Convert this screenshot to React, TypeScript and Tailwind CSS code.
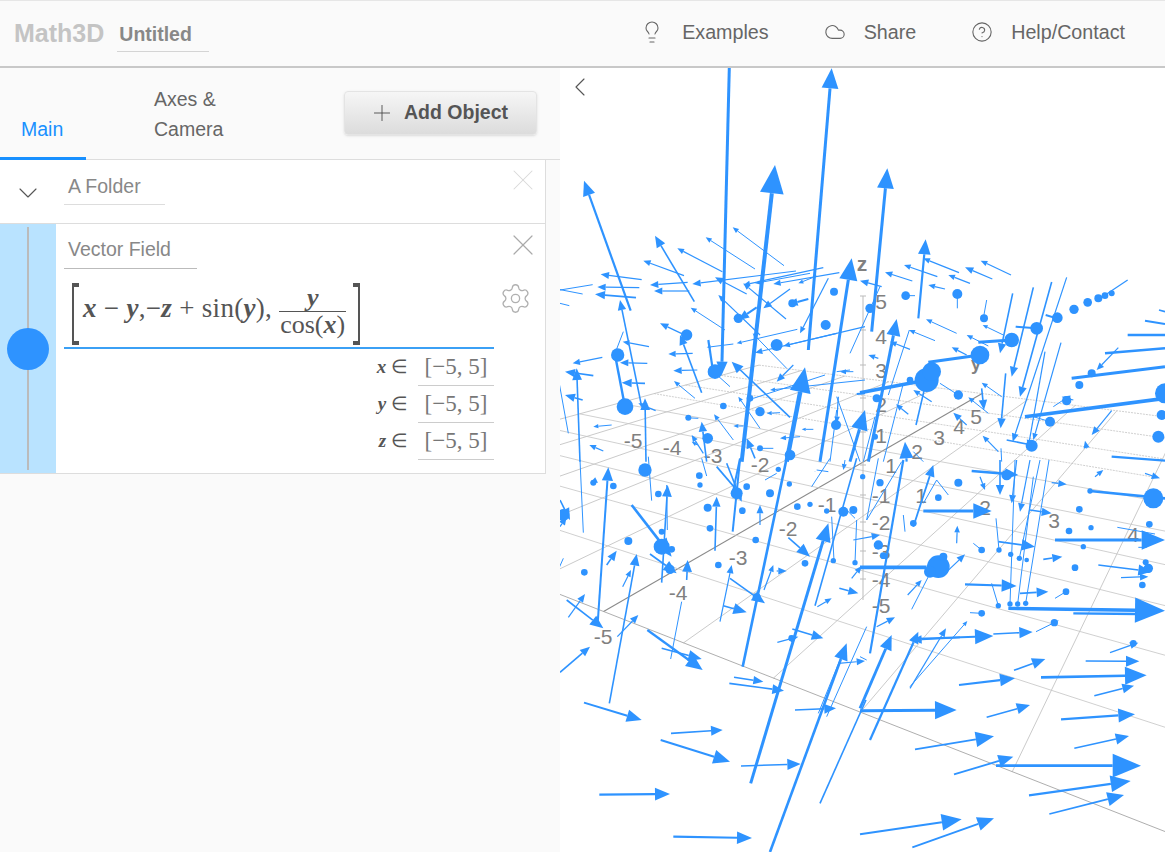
import { Lightbulb, Cloud, CircleHelp, Plus, ChevronDown, ChevronLeft, X, Settings } from "lucide-react";

type A = number[];
const BLUE = "#2e93ff";

const Q1: A[] = [
  [508,-10,485,915,40,3],[745,840,815,-5,60],[545,1175,645,285,85,4],[212,722,72,332,45],[403,695,285,497,35],[672,587,518,472,18],[585,597,437,502,18],[487,605,352,535,20],[372,617,250,572,22],[245,629,122,613,25],[238,653,112,651,25],[228,683,105,673,30],[383,637,270,645,25],[388,663,282,663,25],[708,603,397,642,25],[790,593,550,645,20],[750,610,585,640,15],[838,608,640,642,22],[770,618,715,640,15],[98,644,-30,665,1],[68,672,-20,655,1],[28,707,-20,695,1],[560,672,465,622,25],[678,747,550,640,20],[690,657,610,715,25],[590,712,535,750,32,2],[745,687,685,703,28,2],[680,895,578,790,15],[600,795,475,675,20],[495,780,392,713,18],[378,797,300,760,25],[425,968,360,795,30],[398,850,325,852,22],[412,900,340,902,25],[405,985,342,933,18],[267,830,188,815,20],[262,880,180,878,25],[255,940,185,938,30],[190,785,165,850,1],[168,870,195,1010,1,2.4],[245,1010,180,690,30],[287,1022,235,1000,25],[258,1175,255,985,35],[127,862,38,880,22],[100,917,15,905,30],[68,990,15,975,30],[60,1175,50,895,35],[25,1090,-15,870,1],[155,1065,100,1070,15],[130,1143,88,1125,20],[445,810,460,910,1,2.2],[520,822,440,832,12],[712,778,530,820,15],[915,770,585,848,22],[830,790,670,828,20],[805,625,720,790,20],[780,1175,875,565,65,3],[700,885,650,935,25],[690,1042,515,875,35],[680,1175,735,892,75,4.5],[795,915,580,985,1],[915,930,630,960,15],[600,1075,535,980,15],[520,1110,462,1033,18],[660,1028,620,1030,15],[415,1045,375,1043,12],[550,1068,520,1068,15],[440,1175,425,1055,30],[430,1150,395,1095,20],[412,1125,395,1115,15],[640,1135,600,1135,1],[760,1078,725,1078,12],[585,1165,560,1105,30],[720,1100,660,1105,18],[835,980,830,1060,20],[510,950,460,905,1],[830,905,870,900,1],[880,905,840,905,18],[915,970,890,972,1,2],[810,1175,830,1020,1],[900,1175,830,980,1],
];
const D1: A[] = [[380,795,17],[173,855,20],[195,1010,25],[650,825,18],[797,765,15],[697,700,12],[822,665,12],[490,1008,10],[600,1025,14],[570,985,10],[443,1105,16],[828,1065,15],[600,1135,9],[385,1043,9],[690,1155,16],[535,745,14],[465,905,22]];

const Q2: A[] = [
  [35,785,82,295,60],[175,745,197,508,45],[297,608,190,565,20],[397,627,315,592,25],[453,615,362,572,20],[330,640,265,615,20],[232,620,132,585,20],[157,633,75,607,22],[255,657,205,645,20],[65,650,0,632,25],[60,650,-30,850,1],[165,677,130,677,1],[292,715,292,672,1],[380,690,370,745,1],[458,670,420,850,30],[520,652,455,920,30],[575,636,480,980,30],[620,622,458,1115,25],[603,818,520,1110,20],[555,845,505,1130,20],[557,735,590,745,1,2],[467,770,530,775,1,2],[355,817,455,810,1,3],[205,877,360,855,1,3],[803,630,720,685,20],[290,790,198,748,18],[385,828,320,795,18],[320,855,275,832,20],[225,812,147,780,18],[85,975,148,780,1],[150,838,90,815,20],[25,1175,110,747,50,3],[430,795,368,765,15],[55,865,25,855,20],[0,968,200,930,1,3.6],[240,940,295,975,1],[168,1065,195,950,1,1.6],[215,995,160,960,20],[145,1033,108,1003,20],[425,980,365,938,18],[365,955,372,1020,30],[385,1030,325,982,18],[437,910,422,1075,30],[415,1145,368,1097,20],[320,1065,280,1028,25],[495,1040,915,985,1,3.6],[520,1040,570,1055,1],[580,1010,610,990,1],[635,925,915,890,1,3],[735,850,915,835,1,2.5],[803,795,915,795,1,2.5],[855,752,915,762,1,2],[897,720,915,725,1,1.6],[775,833,710,900,22],[755,1022,695,1095,25],[440,1110,515,1125,1,1.6],[755,1160,915,1172,1,2.2],[70,1175,130,940,1],[10,1175,45,1040,1],[-30,1175,15,1020,60,3],[140,1175,135,1115,50],[190,1175,160,1145,1],[425,1175,423,1135,1],[640,990,605,980,25],[680,1135,675,1112,22],
];
const D2: A[] = [[137,677,13],[292,672,15],[372,745,12],[30,715,14],[592,743,16],[530,775,19],[455,810,22],[360,855,28],[642,718,14],[683,697,13],[715,685,12],[735,677,10],[755,670,9],[695,910,12],[658,945,12],[200,930,36],[215,905,28],[295,975,14],[50,985,12],[150,930,10],[570,1055,15],[620,992,14],[915,970,30],[905,1035,15],[895,1100,18],[515,1127,18],[45,1100,9]];

const Q3: A[] = [
  [70,218,60,0,1],[275,122,265,-10,1],[113,490,145,22,40,2],[305,368,323,75,35],[518,215,540,0,1,2],[465,272,470,110,30],[600,195,600,135,25],[148,730,230,282,35],[215,135,335,290,55,2.6],[270,282,350,340,40],[380,360,383,300,35],[332,597,365,425,1],[510,355,615,430,40],[480,485,515,315,25],[548,620,680,-5,1,2.6],[490,437,560,457,40],[305,565,425,597,40],[262,510,428,630,50,2.2],[20,420,130,505,40],[25,472,75,402,25],[172,530,235,465,25],[0,637,90,560,30],[188,380,213,330,20],[140,315,170,272,30],[72,728,245,780,45,2],[333,820,488,810,35],[302,840,510,905,50,2],[543,918,722,912,40],[118,1004,330,1002,45],[340,1130,576,1134,45],[572,970,805,190,55,3],[630,1176,860,550,50,2.6],[780,1030,918,720,1,1.6],[508,670,672,692,35],[522,652,610,665,30],[705,750,828,745,35],[652,547,715,530,25],[697,507,790,535,35],[612,390,640,315,20],[650,333,680,333,25],[685,233,750,290,40],[765,437,890,-5,1,1.6],[772,440,815,415,20],[838,385,895,400,30],[835,610,915,603,25],[470,20,530,90,1,1.8],[500,10,545,125,30],[440,48,425,-5,1],[540,-5,520,90,1,2],[-10,340,10,295,1],[0,200,20,170,25],[110,60,90,70,22],[0,120,30,180,35],[320,75,322,210,1],[885,175,860,150,1],[815,170,822,302,1],[890,180,885,308,1],[875,355,905,318,22],[775,760,850,575,1],[920,500,800,770,1],[810,-5,755,80,1],[770,30,805,35,1],[650,40,615,60,1],[855,0,850,30,18],
];
const D3: A[] = [[255,30,20],[205,243,12],[450,205,10],[443,143,12],[547,152,10],[587,240,10],[418,47,10],[420,75,8],[560,80,10],[655,28,8],[688,72,8],[712,140,10],[750,133,8],[800,153,8],[735,310,10],[820,302,8],[885,308,8],[880,150,12],[850,155,15],[475,315,10],[73,337,10],[160,78,10],[295,102,10],[335,268,10],[630,100,12],[530,100,18],[305,260,24],[330,328,14],[695,535,10],[10,165,18],[590,412,12],[305,215,9],[100,68,9],[765,35,1]];

const Q4: A[] = [
  [0,322,200,322,1,3.6],[0,752,290,750,65,3],[30,840,175,515,35,2.2],[0,745,95,525,45,2.8],[155,537,400,528,55,2],[300,532,155,540,30],[400,522,518,516,40],[528,515,595,482,1],[150,685,258,505,25],[150,680,322,483,15],[50,500,105,472,25],[330,458,365,460,1],[585,240,915,240,70,3],[190,153,395,153,55,3],[445,445,915,452,90,3.4],[640,460,830,462,1,2.4],[315,373,470,378,45],[480,400,565,395,35],[585,415,618,395,1],[395,370,415,437,1],[408,175,417,270,1],[465,0,450,432,1],[520,50,473,432,1],[567,0,497,430,1],[540,0,478,295,1],[420,0,420,105,30],[470,0,455,130,25],[510,0,480,155,25],[415,245,525,260,40],[550,298,607,290,30],[510,150,575,160,30],[575,68,620,73,25],[335,33,475,45,40,2.5],[690,93,915,115,1,2.6],[715,315,875,335,40],[783,353,865,350,25],[772,202,885,222,1],[835,262,860,262,1],[750,578,835,548,25],[677,603,838,604,40],[543,652,860,646,65,2.6],[703,707,822,677,35],[603,778,825,763,50],[643,865,807,828,40],[462,631,556,597,40],[380,772,510,735,40],[297,675,465,655,45],[165,868,402,829,55,1.8],[282,943,460,890,45,1.8],[408,917,843,917,85,2.6],[507,1006,812,963,60,2.2],[568,1062,792,1005,50,1.8],[0,1123,305,1078,60,2],[157,1162,402,1075,50,1.8],[855,40,900,55,25],[155,448,205,350,1],[143,405,185,360,20],[255,340,315,283,25],[160,200,220,15,35,1.8],[290,250,292,197,20],[30,580,130,0,1,2.2],[135,215,130,165,1],[360,50,375,90,20],[340,250,365,270,1],[125,5,20,180,1],[265,105,230,60,1],[230,60,190,130,1],[705,50,730,30,20],[20,180,55,-5,1],[-20,240,60,225,25],[0,590,20,600,1]];
const D4: A[] = [[658,148,10],[868,193,10],[693,203,8],[627,213,10],[670,260,8],[857,307,9],[645,323,10],[847,375,10],[365,270,10],[417,270,8],[452,283,8],[478,295,8],[500,300,7],[450,432,8],[473,432,8],[497,430,8],[415,437,8],[618,395,10],[583,488,11],[365,460,10],[235,320,34],[210,335,18],[250,290,12],[880,115,30],[865,325,14],[440,45,16],[60,68,11],[160,190,10],[295,68,12],[235,113,10],[55,255,14],[70,287,10],[8,50,8],[820,550,10],[690,93,8]];

function arrow(a: A, ox: number, oy: number, k: string) {
  const [x1, y1, x2, y2, h, sw] = a;
  const X1 = ox + x1 / 3, Y1 = oy + y1 / 3, X2 = ox + x2 / 3, Y2 = oy + y2 / 3;
  const dx = X2 - X1, dy = Y2 - Y1, L = Math.hypot(dx, dy) || 1;
  const ux = dx / L, uy = dy / L;
  const w = sw ?? (h < 20 ? 1 : h < 30 ? 1.2 : h < 45 ? 1.6 : h < 60 ? 2.2 : 3);
  if (h <= 1) return <line key={k} x1={X1} y1={Y1} x2={X2} y2={Y2} stroke={BLUE} strokeWidth={w} />;
  const hl = h / 3, hw = hl * 0.42;
  const bx = X2 - ux * hl, by = Y2 - uy * hl;
  const pts = `${X2},${Y2} ${bx - uy * hw},${by + ux * hw} ${bx + uy * hw},${by - ux * hw}`;
  return (
    <g key={k}>
      <line x1={X1} y1={Y1} x2={bx} y2={by} stroke={BLUE} strokeWidth={w} />
      <polygon points={pts} fill={BLUE} />
    </g>
  );
}

const VA = [1275, 225], VB = [-403, 217];
const frontY = (x: number) => 595 + 0.392 * (x - 560);
const aNear = [295, 345, 400, 460, 530, 603, 683, 773, 860, 1012];
const bAt860 = [712, 628, 570, 530, 497, 470, 447, 428, 412, 395, 378];
function inter(ax: number, by860: number) {
  const ay = frontY(ax);
  const m1 = (VA[1] - ay) / (VA[0] - ax);
  const m2 = (by860 - VB[1]) / (860 - VB[0]);
  const x = (by860 - 860 * m2 - ay + ax * m1) / (m1 - m2);
  return [x, ay + m1 * (x - ax)];
}

function Grid() {
  return (
    <g fill="none">
      {aNear.map((n, i) => {
        const p = inter(n, bAt860[0]), q = inter(n, bAt860[10]);
        return <line key={n} x1={p[0]} y1={p[1]} x2={q[0]} y2={q[1]} stroke={i === 5 ? "#8a8a8a" : "#bdbdbd"} strokeWidth={i === 5 ? 1.1 : 0.8} />;
      })}
      {bAt860.map((b, j) => {
        const p = inter(aNear[0], b), q = inter(1012, b);
        const extend = 1165;
        const m = (b - VB[1]) / (860 - VB[0]);
        return <line key={b} x1={p[0]} y1={p[1]} x2={j < 6 ? extend : q[0]} y2={j < 6 ? b + m * (extend - 860) : q[1]} stroke={j === 0 ? "#999" : "#c4c4c4"} strokeWidth={0.8} strokeDasharray={j > 6 ? "2 1" : undefined} />;
      })}
      <line x1="863" y1="296" x2="863" y2="600" stroke="#bbb" strokeWidth="1" />
      {[296, 330, 365, 398, 432, 465, 495, 522, 551, 579].map((y) => (
        <line key={y} x1="860" y1={y} x2="866" y2={y} stroke="#bbb" strokeWidth="1" />
      ))}
    </g>
  );
}

const labels: [string, number, number][] = [
  ["5", 881, 309], ["4", 881, 344], ["3", 881, 378], ["2", 881, 412], ["1", 881, 443],
  ["-1", 881, 503], ["-2", 881, 530], ["-3", 881, 559], ["-4", 881, 587], ["-5", 881, 613],
  ["5", 976, 424], ["4", 959, 434], ["3", 939, 445], ["2", 917, 459], ["1", 891, 473],
  ["1", 921, 503], ["2", 985, 515], ["3", 1054, 528], ["4", 1133, 542],
  ["-1", 827, 512], ["-2", 788, 536], ["-3", 738, 565], ["-4", 678, 600], ["-5", 603, 644],
  ["-5", 633, 448], ["-4", 672, 455], ["-3", 713, 463], ["-2", 760, 472],
];

function Scene() {
  const sets: [A[], A[], number, number][] = [
    [Q1, D1, 560, 70],
    [Q2, D2, 860, 70],
    [Q3, D3, 560, 460],
    [Q4, D4, 860, 460],
  ];
  return (
    <svg viewBox="560 68 605 784" className="block w-full h-full">
      <Grid />
      {labels.map(([t, x, y], i) => (
        <text key={i} x={x} y={y} textAnchor="middle" fontSize="21" fill="#808080" fontFamily="'Liberation Sans', sans-serif">{t}</text>
      ))}
      <text x="862" y="271" textAnchor="middle" fontSize="21" fontWeight="700" fill="#808080" fontFamily="'Liberation Sans', sans-serif">z</text>
      <text x="976" y="370" textAnchor="middle" fontSize="18" fontWeight="700" fill="#808080" fontFamily="'Liberation Sans', sans-serif">y</text>
      {sets.map(([as, ds, ox, oy], s) => (
        <g key={s}>
          {as.map((a, i) => arrow(a, ox, oy, `${s}a${i}`))}
          {ds.map(([x, y, r], i) => (
            <circle key={i} cx={ox + x / 3} cy={oy + y / 3} r={r / 3} fill={BLUE} />
          ))}
        </g>
      ))}
    </svg>
  );
}

function NavItem({ icon, label }: { icon: React.ReactNode; label: string }) {
  return (
    <div className="flex items-center gap-[18px] text-[19.7px] text-[#666]">
      {icon}
      <span>{label}</span>
    </div>
  );
}

const V = ({ c }: { c: string }) => <span className="italic font-bold">{c}</span>;

function Bracket({ right }: { right?: boolean }) {
  return (
    <div className={`w-[7px] h-[62px] border-y-[4px] border-[#555] ${right ? "border-r-2" : "border-l-2"}`} />
  );
}

function Range({ v }: { v: string }) {
  return (
    <div className="flex items-end justify-end h-[37px]">
      <div className="flex items-center gap-[10px] h-full font-['Liberation_Serif',serif] text-[19px] text-[#555]">
        <span><span className="italic font-bold">{v}</span> ∈</span>
        <div className="w-[76px] h-full border-b border-[#ccc] flex items-center justify-center text-[23px] text-[#777]">[−5, 5]</div>
      </div>
    </div>
  );
}

export default function App() {
  return (
    <div className="w-[1165px] h-[852px] overflow-hidden flex flex-col bg-white font-['Liberation_Sans',Arial,sans-serif]">
      <header className="h-[68px] shrink-0 bg-[#fafafa] border-t border-t-[#e6e6e6] border-b-2 border-b-[#c8c8c8] flex items-center justify-between pl-[14px] pr-[40px]">
        <div className="flex items-start">
          <span className="mt-[2px] text-[25px] leading-[32px] font-bold text-[#c4c4c4]">Math3D</span>
          <div className="ml-[13px] w-[92px] h-[37px] border-b border-[#d4d4d4] pl-[2px] pt-[7px] text-[19.5px] leading-[24px] font-bold text-[#888]">Untitled</div>
        </div>
        <div className="flex items-center gap-[55px] -mt-[2px]">
          <NavItem label="Examples" icon={<Lightbulb size={24} strokeWidth={1.1} className="text-[#666]" />} />
          <NavItem label="Share" icon={<Cloud size={22} strokeWidth={1.2} className="text-[#666]" />} />
          <NavItem label="Help/Contact" icon={<CircleHelp size={22} strokeWidth={1.2} className="text-[#666]" />} />
        </div>
      </header>
      <div className="flex flex-1 min-h-0">
        <aside className="w-[560px] shrink-0 bg-[#fafafa]">
          <div className="h-[92px] relative flex border-b border-[#ddd]">
            <div className="w-[86px] h-[92px] border-b-[3px] border-[#1890ff] flex items-end pb-[13px] pl-[21px] text-[19.5px] leading-[30px] text-[#1890ff]">Main</div>
            <div className="ml-[68px] w-[90px] pt-[16px] text-[19.5px] leading-[30px] text-[#666]">Axes &amp; Camera</div>
            <div className="ml-[100px] mt-[23px] w-[193px] h-[44px] rounded-[4px] border border-[#e4e4e4] bg-gradient-to-b from-[#f6f6f6] to-[#dcdcdc] shadow-sm flex items-center pl-[24px]">
              <Plus size={26} strokeWidth={0.8} className="text-[#444]" />
              <span className="ml-[9px] text-[19.5px] font-bold text-[#555]">Add Object</span>
            </div>
          </div>
          <div className="w-[546px] h-[64px] bg-white border-r border-b border-[#ddd] flex relative">
            <div className="w-[56px] flex items-center justify-center pt-[3px]">
              <ChevronDown size={32} strokeWidth={0.85} className="text-[#555]" />
            </div>
            <div className="ml-[8px] mt-[11px] w-[101px] h-[34px] border-b border-[#ddd] pl-[4px] text-[19.5px] leading-[30px] text-[#888]">A Folder</div>
            <X size={36} strokeWidth={0.7} className="absolute right-[4px] top-[2px] text-[#d8d8d8]" />
          </div>
          <div className="w-[546px] h-[250px] bg-white border-r border-b border-[#ddd] flex relative">
            <div className="w-[56px] bg-[#b9e3ff] relative flex items-center justify-center">
              <div className="absolute left-[27px] top-[3px] bottom-[3px] w-[1.5px] bg-[#bbb]" />
              <div className="relative w-[42px] h-[42px] rounded-full bg-[#2e93ff]" />
            </div>
            <div className="ml-[8px] w-[430px]">
              <div className="mt-[10px] w-[133px] h-[35px] border-b border-[#bbb] pl-[4px] text-[19.5px] leading-[30px] text-[#888]">Vector Field</div>
              <div className="h-[80px] border-b-[2px] border-[#3ba0f5] pl-[8px] pt-[14px] flex items-start font-['Liberation_Serif',serif] text-[#555] text-[27px]">
                <Bracket />
                <div className="flex items-center h-[58px] ml-[4px]">
                  <span className="whitespace-nowrap tracking-[0.3px] -mt-[8px]"><V c="x" /> − <V c="y" />,−<V c="z" /> + sin(<V c="y" />),&nbsp;</span>
                  <div className="flex flex-col items-center text-[26px] leading-[26px] -mt-[2px]">
                    <div className="px-[2px]"><V c="y" /></div>
                    <div className="border-t border-[#555] px-[1px] whitespace-nowrap">cos(<V c="x" />)</div>
                  </div>
                </div>
                <div className="ml-[7px]"><Bracket right /></div>
              </div>
              <div>
                <Range v="x" />
                <Range v="y" />
                <Range v="z" />
              </div>
            </div>
            <X size={36} strokeWidth={0.8} className="absolute right-[4px] top-[3px] text-[#aaa]" />
            <Settings size={33} strokeWidth={0.95} className="absolute right-[13px] top-[58px] text-[#b0b0b0]" />
          </div>
        </aside>
        <main className="flex-1 min-w-0 relative bg-white">
          <Scene />
          <ChevronLeft size={32} strokeWidth={0.85} className="absolute left-[4px] top-[3px] text-[#555]" />
        </main>
      </div>
    </div>
  );
}
